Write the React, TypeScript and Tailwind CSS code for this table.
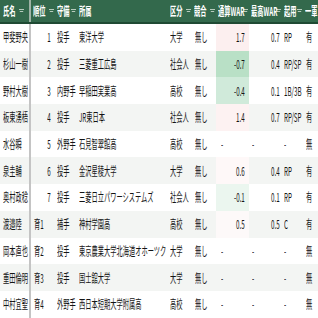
import React from "react";

type Row = {
  name: string;
  rank: string;
  pos: string;
  team: string;
  kind: string;
  comp: string;
  war: string;
  best: string;
  role: string;
  first: string;
  heat: string;
};

const rows: Row[] = [
  { name: "甲斐野央", rank: "1", pos: "投手", team: "東洋大学", kind: "大学", comp: "無し", war: "1.7", best: "0.7", role: "RP", first: "有", heat: "bg-[#fcefef]" },
  { name: "杉山一樹", rank: "2", pos: "投手", team: "三菱重工広島", kind: "社会人", comp: "無し", war: "-0.7", best: "0.4", role: "RP/SP", first: "有", heat: "bg-[#b9e0c6]" },
  { name: "野村大樹", rank: "3", pos: "内野手", team: "早稲田実業高", kind: "高校", comp: "無し", war: "-0.4", best: "0.1", role: "1B/3B", first: "有", heat: "bg-[#d0eada]" },
  { name: "板東湧梧", rank: "4", pos: "投手", team: "JR東日本", kind: "社会人", comp: "無し", war: "1.4", best: "0.7", role: "RP/SP", first: "有", heat: "bg-[#fdf2f2]" },
  { name: "水谷瞬", rank: "5", pos: "外野手", team: "石見智翠館高", kind: "高校", comp: "無し", war: "-", best: "-", role: "-", first: "無", heat: "" },
  { name: "泉圭輔", rank: "6", pos: "投手", team: "金沢星稜大学", kind: "大学", comp: "無し", war: "0.6", best: "0.4", role: "RP", first: "有", heat: "bg-[#fef8f8]" },
  { name: "奥村政稔", rank: "7", pos: "投手", team: "三菱日立パワーシステムズ", kind: "社会人", comp: "無し", war: "-0.1", best: "0.1", role: "RP", first: "有", heat: "bg-[#ebf6ef]" },
  { name: "渡邉陸", rank: "育1", pos: "捕手", team: "神村学園高", kind: "高校", comp: "無し", war: "0.5", best: "0.5", role: "C", first: "有", heat: "bg-[#fdf9f9]" },
  { name: "岡本直也", rank: "育2", pos: "投手", team: "東京農業大学北海道オホーツク", kind: "大学", comp: "無し", war: "-", best: "-", role: "-", first: "無", heat: "" },
  { name: "重田倫明", rank: "育3", pos: "投手", team: "国士舘大学", kind: "大学", comp: "無し", war: "-", best: "-", role: "-", first: "無", heat: "" },
  { name: "中村宜聖", rank: "育4", pos: "外野手", team: "西日本短期大学附属高", kind: "高校", comp: "無し", war: "-", best: "-", role: "-", first: "無", heat: "" },
];

const cols = "grid grid-cols-[31px_24px_22px_91px_24px_24px_33px_33px_21px_15px]";

function Txt({ children, right }: { children: React.ReactNode; right?: boolean }) {
  return (
    <span
      className={
        right
          ? "inline-block whitespace-nowrap scale-x-[0.52] origin-right"
          : "inline-block whitespace-nowrap scale-x-[0.52] origin-left"
      }
    >
      {children}
    </span>
  );
}

function Filter() {
  return (
    <svg width="5" height="6" viewBox="0 0 5 6" className="shrink-0">
      <path d="M0 1.5h5M0.8 3.5h3.4" stroke="#b7cbbd" strokeWidth="1" />
    </svg>
  );
}

function Head({ label, first }: { label: string; first?: boolean }) {
  return (
    <div
      className={
        first
          ? "flex items-center justify-between pl-[3px] pr-[5px] border-r-2 border-[#9fb3a6]"
          : "flex items-center gap-[2px] pl-[2px] overflow-visible"
      }
    >
      <span className="inline-block w-0 overflow-visible">
        <Txt>{label}</Txt>
      </span>
      <span className={first ? "" : "ml-auto pr-[1px]"}>
        <Filter />
      </span>
    </div>
  );
}

const isNum = (s: string) => /^-?\d/.test(s) && s !== "-";

export default function App() {
  return (
    <div className="w-[318px] h-[318px] overflow-hidden bg-white text-[12px] leading-none text-[#141414] font-['Noto_Sans_CJK_JP','Noto_Sans',sans-serif]">
      <div className={`${cols} h-[24px] bg-[#33694c] border-b-2 border-[#1f4a33] text-white font-bold`}>
        <Head label="氏名" first />
        <Head label="順位" />
        <Head label="守備" />
        <div className="flex items-center pl-[2px]">
          <Txt>所属</Txt>
        </div>
        <Head label="区分" />
        <Head label="競合" />
        <Head label="通算WAR" />
        <Head label="最高WAR" />
        <Head label="起用" />
        <div className="flex items-center pl-[2px]">
          <Txt>一軍</Txt>
        </div>
      </div>
      {rows.map((r, i) => (
        <div key={r.name} className={`${cols} h-[26.7px] ${i % 2 === 1 ? "bg-[#f3f5f3]" : "bg-white"}`}>
          <div className="flex items-center pl-[3px] border-r-2 border-[#c4c4c4]">
            <Txt>{r.name}</Txt>
          </div>
          {isNum(r.rank) ? (
            <div className="flex items-center justify-end pr-[4px]">
              <Txt right>{r.rank}</Txt>
            </div>
          ) : (
            <div className="flex items-center pl-[3px]">
              <Txt>{r.rank}</Txt>
            </div>
          )}
          <div className="flex items-center pl-[2px]">
            <Txt>{r.pos}</Txt>
          </div>
          <div className="flex items-center pl-[2px]">
            <Txt>{r.team}</Txt>
          </div>
          <div className="flex items-center pl-[2px]">
            <Txt>{r.kind}</Txt>
          </div>
          <div className="flex items-center pl-[3px]">
            <Txt>{r.comp}</Txt>
          </div>
          {isNum(r.war) ? (
            <div className={`flex items-center justify-end pr-[4px] ${r.heat}`}>
              <Txt right>{r.war}</Txt>
            </div>
          ) : (
            <div className="flex items-center pl-[5px]">
              <Txt>{r.war}</Txt>
            </div>
          )}
          {isNum(r.best) ? (
            <div className="flex items-center justify-end pr-[2px]">
              <Txt right>{r.best}</Txt>
            </div>
          ) : (
            <div className="flex items-center pl-[3px]">
              <Txt>{r.best}</Txt>
            </div>
          )}
          <div className="flex items-center pl-[2px]">
            <Txt>{r.role}</Txt>
          </div>
          <div className="flex items-center pl-[3px]">
            <Txt>{r.first}</Txt>
          </div>
        </div>
      ))}
    </div>
  );
}
